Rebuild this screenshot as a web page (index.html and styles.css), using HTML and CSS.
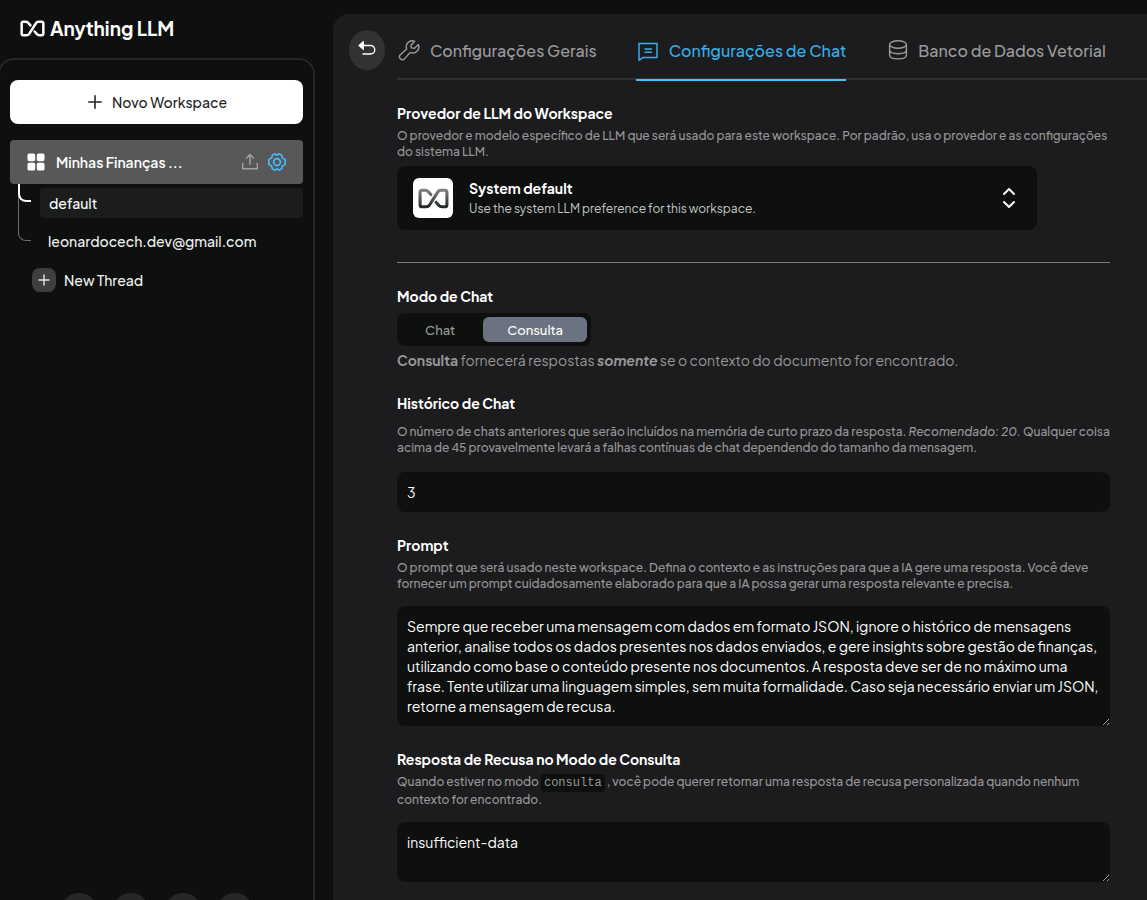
FILE: index.html
```html
<!DOCTYPE html>
<html lang="pt-BR">
<head>
<meta charset="utf-8">
<meta name="viewport" content="width=device-width, initial-scale=1">
<title>Anything LLM</title>
<link rel="stylesheet" href="styles.css">
</head>
<body>
<svg class="defs" width="0" height="0" aria-hidden="true">
  <defs>
    <linearGradient id="steel" x1="0" y1="0" x2="0" y2="1"><stop offset="0" stop-color="#7d7f80"/><stop offset="1" stop-color="#24282b"/></linearGradient>
    <symbol id="mark" viewBox="0 0 30 20"><path fill="none" stroke-width="3" stroke-linecap="round" stroke-linejoin="round" d="M12.5 6.2 9.8 3.2Q8.6 2 7 2H4Q2 2 2 4V16Q2 18 4 18H8Q9.8 18 11 16.5L19.2 3.6Q20.2 2 22 2H26Q28 2 28 4V16Q28 18 26 18H23Q21.4 18 20.3 16.8L17.5 13.6"/></symbol>
  </defs>
</svg>
<div class="app">
  <aside class="sidebar">
    <a class="brand" href="#">
      <svg class="brand-mark" width="25" height="17" stroke="#fff"><use href="#mark"/></svg>
      <span>Anything LLM</span>
    </a>
    <div class="panel">
      <button class="new-workspace" type="button">
        <svg width="14" height="14" viewBox="0 0 14 14" stroke="#222628" stroke-width="1.6" stroke-linecap="round"><path d="M7 .8v12.4M.8 7h12.4"/></svg>
        Novo Workspace
      </button>
      <div class="workspace">
        <svg width="18" height="18" viewBox="0 0 18 18" fill="#fff"><rect x=".5" y=".5" width="7.7" height="7.7" rx="1.6"/><rect x="9.8" y=".5" width="7.7" height="7.7" rx="1.6"/><rect x=".5" y="9.8" width="7.7" height="7.7" rx="1.6"/><rect x="9.8" y="9.8" width="7.7" height="7.7" rx="1.6"/></svg>
        <a class="workspace-name" href="#">Minhas Finanças ...</a>
        <button class="icon-button" type="button" aria-label="Enviar">
          <svg width="18" height="18" viewBox="0 0 18 18" fill="none" stroke="#a3a3a3" stroke-width="1.4" stroke-linecap="round" stroke-linejoin="round"><path d="M1.7 10.5v5.3h14.6v-5.3M9 11.3V1.5M5.6 4.9 9 1.5l3.4 3.4"/></svg>
        </button>
        <button class="icon-button" type="button" aria-label="Configurações">
          <svg width="20" height="20" viewBox="0 0 20 20" fill="none" stroke="#46c0ff" stroke-width="1.6" stroke-linejoin="round"><circle cx="10" cy="10" r="3.4"/><path d="M7.2 2.1Q8.300 1.500 8.9 2.6Q10 3.500 11.1 2.600Q11.800 1.500 12.800 2.100L14.500 3.100Q15 3.500 15 5.100Q15.200 6.200 16.600 6.700Q18.200 7.200 18.200 8V12Q18.200 12.800 16.600 13.300Q15.200 13.800 15 14.900Q15 16.500 14.500 16.900L12.800 17.900Q11.800 18.500 11.100 17.400Q10 16.500 8.900 17.400Q8.200 18.500 7.200 17.900L5.500 16.900Q5 16.500 5 14.900Q4.800 13.800 3.400 13.300Q1.800 12.800 1.800 12V8Q1.800 7.200 3.400 6.700Q4.800 6.200 5 5.100Q5 3.500 5.500 3.100Z"/></svg>
        </button>
      </div>
      <nav class="threads" aria-label="Threads">
        <span class="branch branch-long"></span>
        <span class="branch branch-active"></span>
        <a class="thread thread-active" href="#">default</a>
        <a class="thread" href="#">leonardocech.dev@gmail.com</a>
      </nav>
      <button class="new-thread" type="button">
        <span class="plus"><svg width="12" height="12" viewBox="0 0 12 12" stroke="#e6e6e6" stroke-width="1.4" stroke-linecap="round"><path d="M6 1v10M1 6h10"/></svg></span>
        New Thread
      </button>
      <footer class="panel-footer">
        <button type="button" aria-label="Código"></button>
        <button type="button" aria-label="Documentação"></button>
        <button type="button" aria-label="Comunidade"></button>
        <button type="button" aria-label="Ajustes"></button>
      </footer>
    </div>
  </aside>

  <main class="main">
    <header class="topbar">
      <button class="back" type="button" aria-label="Voltar">
        <svg width="18" height="18" viewBox="0 0 18 18" fill="none" stroke="#fff" stroke-width="1.4" stroke-linecap="round" stroke-linejoin="round"><path d="M5 4.500H12.500a4.200 4.200 0 0 1 0 8.500H5"/><path fill="#fff" d="M5.300 .8V8.200L1.200 4.500Z"/></svg>
      </button>
      <nav class="tabs" aria-label="Configurações do workspace">
        <a class="tab" href="#">
          <svg width="22" height="22" viewBox="0 0 22 22" fill="none" stroke="currentColor" stroke-width="1.4" stroke-linejoin="round" stroke-linecap="round"><path d="M20.300 4.600 16.200 8.400 13.400 7.900 12.900 5.200 16.700 1.300A6 6 0 0 0 8.700 9L2.300 14.800A2.900 2.900 0 0 0 6.400 18.900L12.300 12.400A6 6 0 0 0 20.300 4.600Z"/></svg>
          Configurações Gerais
        </a>
        <a class="tab tab-active" href="#" aria-current="page">
          <svg width="22" height="22" viewBox="0 0 22 22" fill="none" stroke="currentColor" stroke-width="1.500" stroke-linejoin="round" stroke-linecap="round"><path d="M2 3.500H20V17.500H5.800L2 20.300ZM8 9H14.500M8 12.200H14.500"/></svg>
          Configurações de Chat
        </a>
        <a class="tab" href="#">
          <svg width="22" height="22" viewBox="0 0 22 22" fill="none" stroke="currentColor" stroke-width="1.400"><ellipse cx="12" cy="4.500" rx="8.400" ry="3.800"/><path d="M3.600 4.500V15C3.600 20.200 20.400 20.200 20.400 15V4.500M3.600 9.800C3.600 15 20.400 15 20.400 9.800"/></svg>
          Banco de Dados Vetorial
        </a>
      </nav>
    </header>

    <form class="settings">
      <section class="field provider">
        <h2 class="label">Provedor de LLM do Workspace</h2>
        <p class="hint">O provedor e modelo específico de LLM que será usado para este workspace. Por padrão, usa o provedor e as configurações do sistema LLM.</p>
        <button class="provider-card" type="button">
          <span class="provider-logo"><svg width="31" height="21" stroke="url(#steel)"><use href="#mark"/></svg></span>
          <span class="provider-text">
            <strong>System default</strong>
            <span>Use the system LLM preference for this workspace.</span>
          </span>
          <svg width="14" height="22" viewBox="0 0 14 22" fill="none" stroke="#fff" stroke-width="2" stroke-linecap="round" stroke-linejoin="round"><path d="M2 7 7 2l5 5M2 15l5 5 5-5"/></svg>
        </button>
      </section>

      <section class="field mode">
        <h2 class="label">Modo de Chat</h2>
        <div class="toggle">
          <button type="button">Chat</button>
          <button class="selected" type="button" aria-pressed="true">Consulta</button>
        </div>
        <p class="mode-note"><b>Consulta</b> fornecerá respostas <b><i>somente</i></b> se o contexto do documento for encontrado.</p>
      </section>

      <section class="field">
        <label class="label" for="history">Histórico de Chat</label>
        <p class="hint hint-spaced">O número de chats anteriores que serão incluídos na memória de curto prazo da resposta. <i>Recomendado: 20.</i> Qualquer coisa acima de 45 provavelmente levará a falhas contínuas de chat dependendo do tamanho da mensagem.</p>
        <input class="control history" id="history" type="text" inputmode="numeric" value="3">
      </section>

      <section class="field">
        <label class="label" for="prompt">Prompt</label>
        <p class="hint">O prompt que será usado neste workspace. Defina o contexto e as instruções para que a IA gere uma resposta. Você deve fornecer um prompt cuidadosamente elaborado para que a IA possa gerar uma resposta relevante e precisa.</p>
        <textarea class="control" id="prompt" rows="5">Sempre que receber uma mensagem com dados em formato JSON, ignore o histórico de mensagens anterior, analise todos os dados presentes nos dados enviados, e gere insights sobre gestão de finanças, utilizando como base o conteúdo presente nos documentos. A resposta deve ser de no máximo uma frase. Tente utilizar uma linguagem simples, sem muita formalidade. Caso seja necessário enviar um JSON, retorne a mensagem de recusa.</textarea>
      </section>

      <section class="field">
        <label class="label" for="refusal">Resposta de Recusa no Modo de Consulta</label>
        <p class="hint">Quando estiver no modo <code>consulta</code> , você pode querer retornar uma resposta de recusa personalizada quando nenhum contexto for encontrado.</p>
        <textarea class="control" id="refusal" rows="2">insufficient-data</textarea>
      </section>
    </form>
  </main>
</div>
</body>
</html>
```
FILE: styles.css
```css
* { box-sizing: border-box; }

body {
  margin: 0;
  height: 100vh;
  overflow: hidden;
  background: #0e100f;
  color: #fff;
  font: 14px/20px "Plus Jakarta Sans", Inter, sans-serif;
}

a { color: inherit; text-decoration: none; }
button, input, textarea { font: inherit; color: inherit; }
button { border: 0; padding: 0; background: none; cursor: pointer; }
h2, p { margin: 0; }
svg { display: block; flex: none; }
.defs { position: absolute; }

.app { display: flex; height: calc(100vh + 45px); }

/* Sidebar */
.sidebar {
  flex: none;
  width: 333px;
  padding-right: 18px;
  display: flex;
  flex-direction: column;
}

.brand {
  display: flex;
  align-items: center;
  gap: 5px;
  height: 58px;
  padding: 0 0 2px 20px;
  font-size: 19px;
  font-weight: 700;
}

.panel {
  flex: 1;
  display: flex;
  flex-direction: column;
  margin-left: -2px;
  padding: 20px 10px 14px;
  border: 2px solid #262727;
  border-radius: 16px;
}

.new-workspace {
  display: flex;
  align-items: center;
  justify-content: center;
  gap: 10px;
  height: 44px;
  padding-left: 2px;
  border-radius: 8px;
  background: #fff;
  color: #222628;
  font-weight: 500;
}

.workspace {
  display: flex;
  align-items: center;
  gap: 8px;
  height: 44px;
  margin-top: 16px;
  padding: 0 16px 0 17px;
  border-radius: 4px;
  background: #585858;
}

.workspace-name { flex: 1; padding-left: 3px; font-weight: 600; }

.threads {
  position: relative;
  display: flex;
  flex-direction: column;
  gap: 8px;
  padding: 4px 0 0 30px;
}

.thread {
  padding: 5px 8px;
  border-radius: 4px;
  color: #f0f0f0;
  font-weight: 500;
}

.thread-active { padding-left: 9px; background: #1b1d1c; color: #fff; }

.branch {
  position: absolute;
  top: 0;
  left: 8px;
  width: 13px;
  border-bottom-left-radius: 8px;
}

.branch-active { height: 18px; border: solid #fff; border-width: 0 0 2px 2px; }
.branch-long { height: 57px; border: solid #6c6d6d; border-width: 0 0 1px 1px; }

.new-thread {
  display: flex;
  align-items: center;
  gap: 8px;
  margin-top: 12px;
  padding-left: 22px;
  color: #f0f0f0;
  font-weight: 500;
}

.plus {
  display: grid;
  place-items: center;
  width: 24px;
  height: 24px;
  border-radius: 8px;
  background: #3d3f3e;
}

.panel-footer {
  display: flex;
  justify-content: center;
  gap: 16px;
  margin-top: auto;
}

.panel-footer button {
  width: 36px;
  height: 36px;
  border-radius: 50%;
  background: #272728;
}

/* Main area */
.main {
  flex: 1;
  min-width: 0;
  margin-top: 14px;
  padding: 16px 0 0 16px;
  overflow: hidden;
  border-top-left-radius: 16px;
  background: #1c1c1e;
}

.topbar { display: flex; align-items: flex-start; gap: 12px; }

.back {
  display: grid;
  place-items: center;
  flex: none;
  width: 36px;
  height: 40px;
  border-radius: 50%;
  background: #323234;
}

.tabs {
  flex: 1;
  display: flex;
  gap: 39px;
  height: 50px;
  border-bottom: 2px solid #303032;
}

.tab {
  display: flex;
  align-items: center;
  gap: 10px;
  height: 51px;
  padding-bottom: 8px;
  padding-left: 1px;
  border-bottom: 2px solid transparent;
  color: #9b9b9c;
  font-size: 16px;
  font-weight: 500;
  white-space: nowrap;
}

.tab-active { border-color: #46c0ff; color: #38aee8; }

.settings {
  display: flex;
  flex-direction: column;
  gap: 23px;
  margin: 23px 37px 0 48px;
}

.field { display: flex; flex-direction: column; }

.label { font-size: 14px; line-height: 20px; font-weight: 700; }

.hint {
  margin-top: 5px;
  color: #979798;
  font-size: 12px;
  line-height: 16px;
  font-weight: 500;
}

.hint-spaced { margin-top: 11px; }

.hint code {
  padding: 2px 3px;
  border-radius: 3px;
  background: #0e100f;
  font: 12px/17px "Courier New", "Liberation Mono", monospace;
}

.provider { padding-bottom: 32px; border-bottom: 1px solid #7c7c7d; }

.provider-card {
  display: flex;
  align-items: center;
  gap: 16px;
  max-width: 640px;
  height: 64px;
  margin-top: 6px;
  padding: 0 21px 0 16px;
  border-radius: 8px;
  background: #0e100f;
  text-align: left;
}

.provider-logo {
  display: grid;
  place-items: center;
  width: 40px;
  height: 40px;
  border-radius: 6px;
  background: #fff;
}

.provider-text { flex: 1; display: flex; flex-direction: column; gap: 1px; }
.provider-text strong { font-weight: 700; }
.provider-text span { color: #c6c7c8; font-size: 12px; }

.toggle {
  display: flex;
  gap: 4px;
  align-self: flex-start;
  margin-top: 7px;
  padding: 4px;
  border-radius: 8px;
  background: #0e100f;
}

.toggle button {
  height: 25px;
  padding: 0 24px;
  border-radius: 6px;
  color: #9a9a9b;
  font-size: 13px;
  font-weight: 500;
}

.toggle .selected { background: #6b7282; color: #fff; }

.mode-note { margin-top: 4px; color: #979798; }

.control {
  display: block;
  width: 100%;
  margin: 14px 0 0;
  padding: 10px;
  border: 0;
  border-radius: 8px;
  outline: 0;
  background: #0e100f;
  color: #fff;
  resize: vertical;
}

.history { height: 40px; margin-top: 16px; }
```
